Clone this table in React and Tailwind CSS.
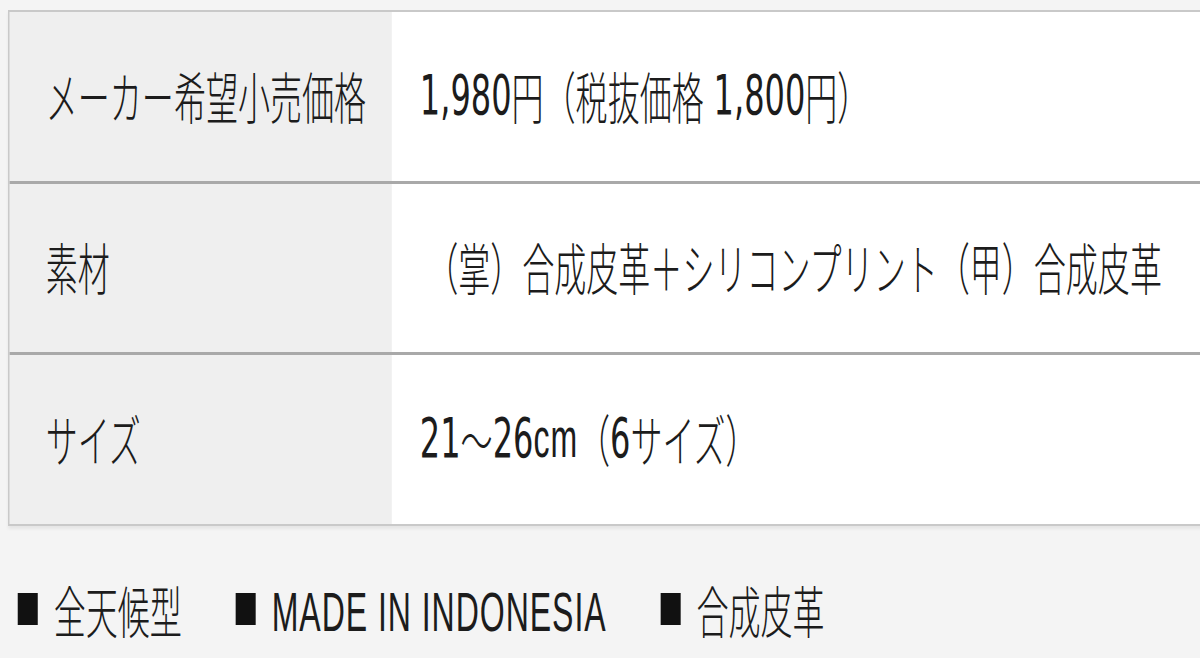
import React from "react";

const rows = [
  { label: "メーカー希望小売価格", value: "1,980円（税抜価格 1,800円）", h: "h-[172px]", pad: "pl-[49px]" },
  { label: "素材", value: "（掌）合成皮革＋シリコンプリント（甲）合成皮革", h: "h-[171px]", pad: "pl-[60px]" },
  { label: "サイズ", value: "21～26cm（6サイズ）", h: "h-[169px]", pad: "pl-[49px]" },
];

const features = ["全天候型", "MADE IN INDONESIA", "合成皮革"];

// latin runs use wider faces than the kana and kanji, like the original font
function Mixed({ text }) {
  const parts = text.split(/([0-9,.]+|[A-Za-z ]+)/).filter(Boolean);
  return parts.map((p, i) => {
    if (/^[0-9,.]+$/.test(p))
      return (
        <span key={i} className="font-['DejaVu_Sans',sans-serif] font-normal">
          {p}
        </span>
      );
    if (/^[A-Za-z ]+$/.test(p))
      return (
        <span key={i} className="font-['Liberation_Sans',sans-serif] font-normal tracking-[0.03em] whitespace-pre">
          {p}
        </span>
      );
    return <span key={i}>{p}</span>;
  });
}

export default function App() {
  return (
    <div className="w-[1200px] h-[658px] overflow-hidden bg-[#f4f4f4] text-[#1c1c1c] font-['Noto_Sans_CJK_JP',sans-serif] font-light">
      {/* the shot is squeezed sideways, so the whole page is drawn wide and scaled down on x */}
      <div className="w-[2098px] origin-top-left scale-x-[0.572] pt-[10px] pl-[14px]">
        <div className="w-[2300px] border-t-2 border-b-2 border-l-[3px] border-[#c9c9c9] shadow-[0_3px_4px_rgba(0,0,0,0.06)]">
          {rows.map((row, i) => (
            <div
              key={row.label}
              className={
                "flex " + row.h + (i < rows.length - 1 ? " border-b-[3px] border-[#a9a9a9]" : "")
              }
            >
              <div className="w-[668px] shrink-0 bg-[#efefef] flex items-center pl-[63px] pb-[4px] text-[56px] leading-none">
                {row.label}
              </div>
              <div className={"flex-1 bg-white flex items-center pb-[4px] text-[56px] leading-none whitespace-nowrap " + row.pad}>
                <Mixed text={row.value} />
              </div>
            </div>
          ))}
        </div>

        <div className="mt-[41px] h-[84px] flex items-center gap-[94px] pl-[17px] text-[56px] leading-none">
          {features.map((f) => (
            <div key={f} className="flex items-center gap-[28px]">
              <span className="inline-block w-[35px] h-[32px] bg-[#111]" />
              <span className="whitespace-nowrap">
                <Mixed text={f} />
              </span>
            </div>
          ))}
        </div>
      </div>
    </div>
  );
}
